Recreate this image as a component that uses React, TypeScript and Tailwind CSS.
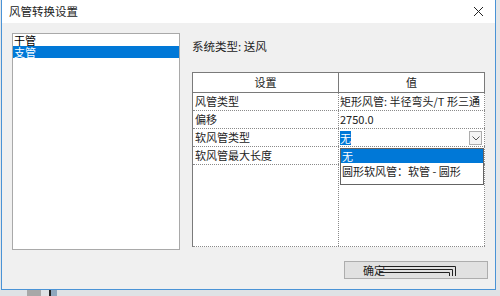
import React from 'react';

const font = { fontFamily: '"Noto Sans CJK SC", "Noto Sans", sans-serif' };

const rows = [
  { name: '风管类型', value: '矩形风管: 半径弯头/T 形三通' },
  { name: '偏移', value: '2750.0' },
  { name: '软风管类型', value: '' },
  { name: '软风管最大长度', value: '' },
];

export default function App() {
  return (
    <div className="relative w-[500px] h-[296px] overflow-hidden bg-[#e4e6e8]" style={font}>
      {/* dialog window */}
      <div className="ml-[1px] w-[495px] h-[290px] border-l border-r border-b border-[#4a93d6] flex flex-col bg-[#f0f0f0]">
        {/* title bar */}
        <div className="h-[23px] bg-white flex items-center justify-between pl-[7px] pr-[8px] shrink-0">
          <span className="text-[11.5px] leading-none text-[#222]">风管转换设置</span>
          <svg width="11" height="11" viewBox="0 0 11 11" className="mr-[3px]">
            <path d="M1 1 L10 10 M10 1 L1 10" stroke="#222" strokeWidth="1" />
          </svg>
        </div>

        <div className="flex-1 flex flex-col">
          <div className="flex pt-[10px] pl-[10px]">
            {/* left list */}
            <div className="w-[168px] h-[217px] bg-white border border-[#a9a9a9] text-[11px] leading-[12px]">
              <div className="h-[12px] pl-[1px] text-black">干管</div>
              <div className="h-[12px] pl-[1px] bg-[#0078d7] text-white">支管</div>
            </div>

            {/* right panel */}
            <div className="ml-[12px] flex flex-col">
              <div className="mt-[6px] h-[14px] text-[11.5px] leading-[14px] text-[#222]">系统类型: 送风</div>

              <div className="relative mt-[19px] w-[293px] h-[175px] bg-white border-l border-t border-[#7a7a7a] text-[11px] text-[#222]">
                {/* header */}
                <div className="grid grid-cols-2 h-[20px] border-b border-[#7a7a7a]">
                  <div className="flex items-center justify-center border-r border-[#7a7a7a]">设置</div>
                  <div className="flex items-center justify-center border-r border-[#7a7a7a]">值</div>
                </div>
                {rows.map((r, i) => (
                  <div key={i} className="grid grid-cols-2 h-[18px] border-b border-dotted border-[#8a8a8a]">
                    <div className="flex items-center pl-[2px] border-r border-dotted border-[#8a8a8a]">{r.name}</div>
                    <div className="flex items-center pl-[1px] border-r border-dotted border-[#8a8a8a] relative">
                      {i === 2 ? (
                        <>
                          <span className="bg-[#0078d7] text-white leading-[14px]">无</span>
                          <div className="absolute right-[2px] top-[2px] w-[13px] h-[14px] border border-[#adadad] bg-[#f4f4f4] flex items-center justify-center">
                            <svg width="8" height="5" viewBox="0 0 8 5">
                              <path d="M0.5 0.5 L4 4 L7.5 0.5" stroke="#555" strokeWidth="1" fill="none" />
                            </svg>
                          </div>
                        </>
                      ) : (
                        r.value
                      )}
                    </div>
                  </div>
                ))}
                <div className="grid grid-cols-2 h-[82px] border-b border-dotted border-[#8a8a8a]">
                  <div className="border-r border-dotted border-[#8a8a8a]" />
                  <div className="border-r border-dotted border-[#8a8a8a]" />
                </div>

                {/* open dropdown list */}
                <div className="absolute left-[147px] top-[75px] w-[144px] h-[37px] bg-white border border-[#646464] text-[11px]">
                  <div className="h-[14px] bg-[#0078d7] text-white pl-[1px] leading-[14px]">无</div>
                  <div className="h-[17px] pl-[1px] leading-[17px] text-[#222]">圆形软风管：软管 - 圆形</div>
                </div>
              </div>
            </div>
          </div>

          {/* bottom button */}
          <div className="flex justify-end pr-[7px] mt-[11px]">
            <div className="relative w-[144px] h-[18px] bg-[#e1e1e1] border border-[#adadad] flex items-center pl-[18px] text-[11px] leading-none text-[#222]">
              <span>确定</span>
              <svg width="80" height="12" viewBox="0 0 80 12" className="absolute left-[34px] top-[3px]">
                <path d="M0 1.5 H76.5 V11" stroke="#222" strokeWidth="1" fill="none" />
                <path d="M0 4.5 H73.5 V11" stroke="#222" strokeWidth="1" fill="none" />
                <path d="M0 7.5 H70.5 V11" stroke="#222" strokeWidth="1" fill="none" />
              </svg>
            </div>
          </div>
        </div>
      </div>

      {/* bottom strip behind the dialog */}
      <div className="flex h-[6px] bg-[#dfe2e5]">
        <div className="w-[27px]" />
        <div className="w-[14px] bg-[#a8a8a8]" />
        <div className="w-[8px]" />
        <div className="w-[2px] bg-[#222]" />
        <div className="w-[6px] bg-[#8fa7bd]" />
      </div>
    </div>
  );
}
